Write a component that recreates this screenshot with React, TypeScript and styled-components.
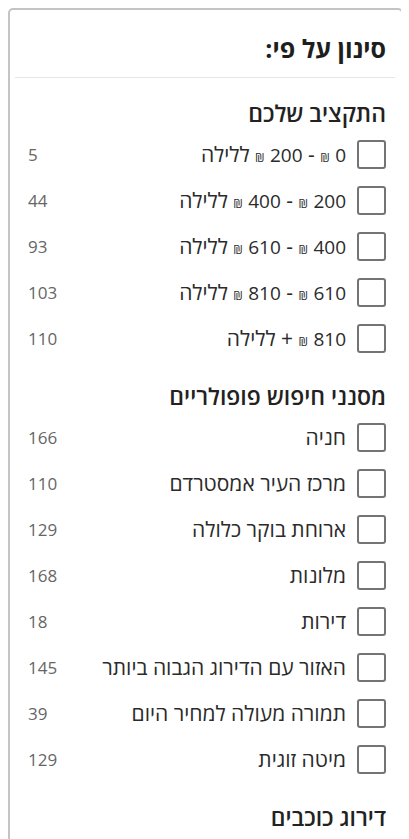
import styled, { createGlobalStyle } from "styled-components";

const GlobalStyle = createGlobalStyle`
  body {
    margin: 8px;
    background: #ffffff;
    font-family: "Open Sans", "DejaVu Sans", sans-serif;
    color: #333333;
  }
`;

const Card = styled.div`
  width: 395px;
  box-sizing: border-box;
  border: 2px solid #c4c4c4;
  border-radius: 5px;
  background: #ffffff;
  direction: rtl;
  padding-bottom: 20px;
`;

const CardHeader = styled.div`
  padding: 24px 15px 15px 12px;
`;

const Title = styled.h2`
  margin: 0;
  font-size: 25px;
  line-height: 28px;
  font-weight: 700;
  color: #1e1e1e;
`;

const Divider = styled.div`
  height: 1px;
  background: #e6e6e6;
  margin: 0 6px 0 5px;
`;

const Section = styled.div`
  padding: 23px 15px 0 18px;
`;

const Heading = styled.h3`
  margin: 0 0 6px;
  font-size: 23px;
  line-height: 24px;
  font-weight: 600;
  color: #222222;
`;

const List = styled.div`
  display: flex;
  flex-direction: column;
`;

const Row = styled.label`
  display: flex;
  align-items: center;
  height: 46px;
  gap: 11px;
  cursor: pointer;
`;

const Box = styled.input`
  appearance: none;
  margin: 0;
  width: 29px;
  height: 29px;
  flex: none;
  box-sizing: border-box;
  border: 2.5px solid #747474;
  border-radius: 3px;
  background: #ffffff;
`;

const Label = styled.span`
  flex: 1;
  font-size: 21px;
  color: #2b2b2b;
  white-space: nowrap;
`;

const Num = styled.span`
  font-size: 19px;
`;

const Cur = styled.span`
  font-size: 12px;
`;

const Count = styled.span`
  font-size: 17px;
  color: #666666;
  min-width: 40px;
  text-align: left;
`;

type Option = { label: string; count: number };

const budget: Option[] = [
  { label: "0 ₪ - 200 ₪ ללילה", count: 5 },
  { label: "200 ₪ - 400 ₪ ללילה", count: 44 },
  { label: "400 ₪ - 610 ₪ ללילה", count: 93 },
  { label: "610 ₪ - 810 ₪ ללילה", count: 103 },
  { label: "810 ₪ + ללילה", count: 110 },
];

const popular: Option[] = [
  { label: "חניה", count: 166 },
  { label: "מרכז העיר אמסטרדם", count: 110 },
  { label: "ארוחת בוקר כלולה", count: 129 },
  { label: "מלונות", count: 168 },
  { label: "דירות", count: 18 },
  { label: "האזור עם הדירוג הגבוה ביותר", count: 145 },
  { label: "תמורה מעולה למחיר היום", count: 39 },
  { label: "מיטה זוגית", count: 129 },
];

// digits and the shekel sign are set apart from the hebrew text
function LabelText({ text }: { text: string }) {
  return (
    <Label>
      {text.split(/(\d+|₪)/).map((part, i) => {
        if (part === "₪") return <Cur key={i}>{part}</Cur>;
        if (/^\d+$/.test(part)) return <Num key={i}>{part}</Num>;
        return part;
      })}
    </Label>
  );
}

function FilterSection({ title, options }: { title: string; options?: Option[] }) {
  return (
    <Section>
      <Heading>{title}</Heading>
      {options && (
        <List>
          {options.map((o) => (
            <Row key={o.label}>
              <Box type="checkbox" />
              <LabelText text={o.label} />
              <Count>{o.count}</Count>
            </Row>
          ))}
        </List>
      )}
    </Section>
  );
}

export default function App() {
  return (
    <>
      <GlobalStyle />
      <Card>
        <CardHeader>
          <Title>סינון על פי:</Title>
        </CardHeader>
        <Divider />
        <FilterSection title="התקציב שלכם" options={budget} />
        <FilterSection title="מסנני חיפוש פופולריים" options={popular} />
        <FilterSection title="דירוג כוכבים" />
      </Card>
    </>
  );
}
